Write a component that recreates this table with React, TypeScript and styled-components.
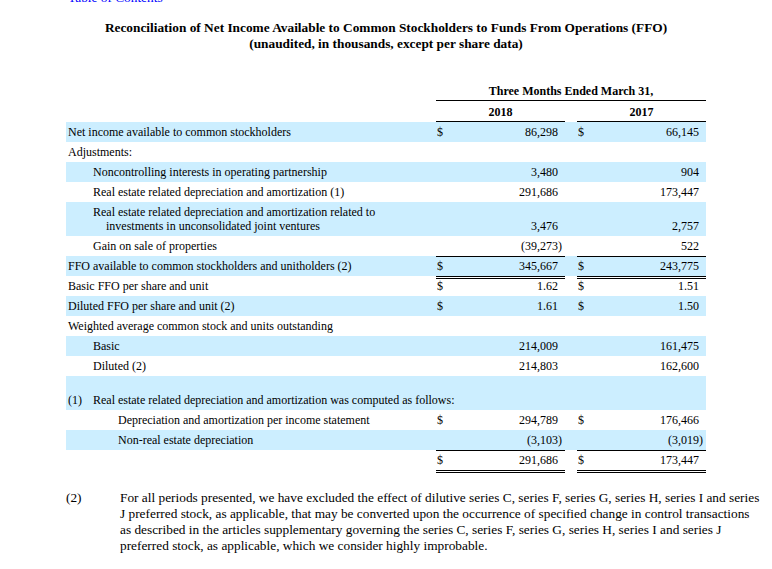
import React from "react";
import styled, { createGlobalStyle, css } from "styled-components";

const GlobalStyle = createGlobalStyle`
  body {
    margin: 0;
    background: #fff;
    color: #000;
    font-family: "Liberation Serif", "Times New Roman", serif;
  }
`;

const SHADE = "#cceeff";

type Rule = "none" | "top" | "topDouble" | "header" | "total";

const rules: Record<Rule, string> = {
  none: "none",
  top: "inset 0 1px 0 #000",
  topDouble: "inset 0 1px 0 #000, inset 0 2px 0 #fff, inset 0 3px 0 #000",
  header: "inset 0 -1px 0 #000",
  total:
    "inset 0 1px 0 #000, inset 0 -1px 0 #000, inset 0 -2px 0 #fff, inset 0 -3px 0 #000",
};

const Page = styled.div`
  width: 772px;
  overflow: hidden;
`;

const TocLink = styled.a`
  display: block;
  width: max-content;
  margin: -10px 0 0 68px;
  font-size: 13.33px;
  line-height: 15px;
  color: #0000ff;
  text-decoration: none;
`;

const Heading = styled.div`
  margin-top: 15px;
  text-align: center;
  font-weight: bold;
  font-size: 13.33px;
  line-height: 16px;
`;

const Sheet = styled.table`
  margin: 29px auto 0;
  width: 640px;
  border-collapse: collapse;
  table-layout: fixed;
  font-size: 12px;
  line-height: 14px;
`;

const Row = styled.tr<{ $shade?: boolean; $h?: number }>`
  background: ${(p) => (p.$shade ? SHADE : "transparent")};
  height: ${(p) => p.$h ?? 20}px;
`;

const HeadCell = styled.td<{ $rule?: boolean }>`
  padding: 0;
  text-align: center;
  font-weight: bold;
  vertical-align: middle;
  box-shadow: ${(p) => (p.$rule ? rules.header : "none")};
`;

const cellBase = css<{ $pb?: number }>`
  padding: 0 0 ${(p) => p.$pb ?? 3}px 0;
  vertical-align: bottom;
  white-space: nowrap;
`;

const LabelCell = styled.td<{ $indent?: number; $pb?: number }>`
  ${cellBase};
  padding-left: ${(p) => 2 + (p.$indent ?? 0) * 25}px;
  padding-right: 24px;
  white-space: normal;
`;

const HangText = styled.div`
  padding-left: 13px;
  text-indent: -13px;
`;

const Marker = styled.span`
  display: inline-block;
  width: 25px;
`;

const DollarCell = styled.td<{ $rule?: Rule; $pb?: number }>`
  ${cellBase};
  padding-left: 1px;
  box-shadow: ${(p) => rules[p.$rule ?? "none"]};
`;

const NumCell = styled.td<{ $rule?: Rule; $pb?: number }>`
  ${cellBase};
  padding-right: 7px;
  text-align: right;
  box-shadow: ${(p) => rules[p.$rule ?? "none"]};
`;

const Paren = styled.span`
  margin-right: -4px;
`;

const GapCell = styled.td`
  padding: 0;
`;

const Note = styled.div`
  display: flex;
  margin: 17px 11px 0 66px;
  font-size: 13.33px;
  line-height: 16px;
`;

const NoteMark = styled.div`
  flex: none;
  width: 54px;
`;

const NoteText = styled.p`
  margin: 0;
  flex: 1;
`;

type Line = {
  label?: string;
  indent?: number;
  hang?: boolean;
  a?: string;
  b?: string;
  dollar?: boolean;
  rule?: Rule;
  shade?: boolean;
  h?: number;
  pb?: number;
};

const lines: Line[] = [
  { label: "Net income available to common stockholders", a: "86,298", b: "66,145", dollar: true, shade: true },
  { label: "Adjustments:" },
  { label: "Noncontrolling interests in operating partnership", indent: 1, a: "3,480", b: "904", shade: true },
  { label: "Real estate related depreciation and amortization (1)", indent: 1, a: "291,686", b: "173,447" },
  {
    label: "Real estate related depreciation and amortization related to investments in unconsolidated joint ventures",
    indent: 1,
    hang: true,
    a: "3,476",
    b: "2,757",
    shade: true,
    h: 34,
  },
  { label: "Gain on sale of properties", indent: 1, a: "(39,273)", b: "522" },
  { label: "FFO available to common stockholders and unitholders (2)", a: "345,667", b: "243,775", dollar: true, rule: "top", shade: true },
  { label: "Basic FFO per share and unit", a: "1.62", b: "1.51", dollar: true, rule: "topDouble" },
  { label: "Diluted FFO per share and unit (2)", a: "1.61", b: "1.50", dollar: true, shade: true },
  { label: "Weighted average common stock and units outstanding" },
  { label: "Basic", indent: 1, a: "214,009", b: "161,475", shade: true },
  { label: "Diluted (2)", indent: 1, a: "214,803", b: "162,600" },
];

const detail: Line[] = [
  { label: "Depreciation and amortization per income statement", indent: 2, a: "294,789", b: "176,466", dollar: true },
  { label: "Non-real estate depreciation", indent: 2, a: "(3,103)", b: "(3,019)", shade: true },
  { label: "", a: "291,686", b: "173,447", dollar: true, rule: "total", h: 23, pb: 6 },
];

function Amount({ v }: { v?: string }) {
  if (!v) return null;
  if (v.startsWith("(")) {
    return (
      <>
        {v.slice(0, -1)}
        <Paren>)</Paren>
      </>
    );
  }
  return <>{v}</>;
}

function BodyRow({ line }: { line: Line }) {
  const rule = line.a !== undefined ? line.rule : "none";
  return (
    <Row $shade={line.shade} $h={line.h}>
      <LabelCell $indent={line.indent} $pb={line.pb}>
        {line.hang ? <HangText>{line.label}</HangText> : line.label}
      </LabelCell>
      <DollarCell $rule={rule} $pb={line.pb}>
        {line.dollar ? "$" : ""}
      </DollarCell>
      <NumCell $rule={rule} $pb={line.pb}>
        <Amount v={line.a} />
      </NumCell>
      <GapCell />
      <DollarCell $rule={rule} $pb={line.pb}>
        {line.dollar ? "$" : ""}
      </DollarCell>
      <NumCell $rule={rule} $pb={line.pb}>
        <Amount v={line.b} />
      </NumCell>
    </Row>
  );
}

export default function App() {
  return (
    <Page>
      <GlobalStyle />
      <TocLink href="#">Table of Contents</TocLink>
      <Heading>
        Reconciliation of Net Income Available to Common Stockholders to Funds From Operations (FFO)
        <br />
        (unaudited, in thousands, except per share data)
      </Heading>

      <Sheet>
        <colgroup>
          <col style={{ width: 370 }} />
          <col style={{ width: 14 }} />
          <col style={{ width: 115 }} />
          <col style={{ width: 12 }} />
          <col style={{ width: 14 }} />
          <col style={{ width: 115 }} />
        </colgroup>
        <tbody>
          <Row>
            <GapCell />
            <HeadCell colSpan={5} $rule>
              Three Months Ended March 31,
            </HeadCell>
          </Row>
          <Row $h={21}>
            <GapCell />
            <HeadCell colSpan={2} $rule>
              2018
            </HeadCell>
            <GapCell />
            <HeadCell colSpan={2} $rule>
              2017
            </HeadCell>
          </Row>
          {lines.map((l, i) => (
            <BodyRow key={i} line={l} />
          ))}
          <Row $shade $h={34}>
            <LabelCell colSpan={6}>
              <Marker>(1)</Marker>Real estate related depreciation and amortization was computed as follows:
            </LabelCell>
          </Row>
          {detail.map((l, i) => (
            <BodyRow key={i} line={l} />
          ))}
        </tbody>
      </Sheet>

      <Note>
        <NoteMark>(2)</NoteMark>
        <NoteText>
          For all periods presented, we have excluded the effect of dilutive series C, series F, series G, series H,
          series I and series J preferred stock, as applicable, that may be converted upon the occurrence of specified
          change in control transactions as described in the articles supplementary governing the series C, series F,
          series G, series H, series I and series J preferred stock, as applicable, which we consider highly
          improbable.
        </NoteText>
      </Note>
    </Page>
  );
}
